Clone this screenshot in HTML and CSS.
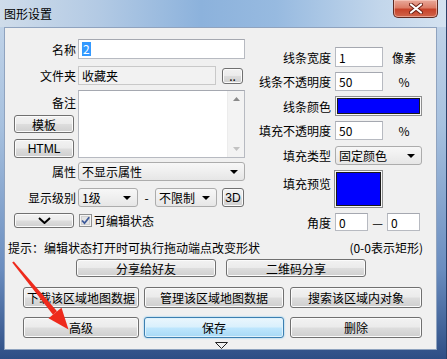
FILE: index.html
```html
<!DOCTYPE html>
<html lang="zh-CN">
<head>
  <meta charset="UTF-8">
  <title>图形设置</title>
  <link rel="stylesheet" href="styles.css">
</head>
<body>
  <div class="window">
    <div class="titlebar">
      <span class="title">图形设置</span>
      <div class="close">
        <svg width="14" height="11" viewBox="0 0 14 11">
          <path d="M2 1.5 L12 9.5 M12 1.5 L2 9.5" stroke="#6a1f14" stroke-width="4" stroke-linecap="round"/>
          <path d="M2 1.5 L12 9.5 M12 1.5 L2 9.5" stroke="#ffffff" stroke-width="2.2" stroke-linecap="round"/>
        </svg>
      </div>
    </div>

    <div class="client">
      <div class="top">
        <!-- columna izquierda -->
        <div class="left">
          <div class="row r-name">
            <span class="lbl">名称</span>
            <div class="field w-full"><span class="selected">2</span></div>
          </div>
          <div class="row r-folder">
            <span class="lbl">文件夹</span>
            <div class="field readonly">收藏夹</div>
            <button class="btn dots">..</button>
          </div>
          <div class="row r-memo">
            <div class="memo-side">
              <span class="lbl">备注</span>
              <button class="btn side b-tpl">模板</button>
              <button class="btn side b-html">HTML</button>
            </div>
            <div class="field textarea">
              <div class="vscroll">
                <svg width="7" height="4" viewBox="0 0 7 4"><polygon points="0,4 7,4 3.5,0" fill="#8a8a8a"/></svg>
                <svg width="7" height="4" viewBox="0 0 7 4"><polygon points="0,0 7,0 3.5,4" fill="#c2c2c2"/></svg>
              </div>
            </div>
          </div>
          <div class="row r-attr">
            <span class="lbl">属性</span>
            <div class="combo w-full"><span>不显示属性</span><i class="caret"></i></div>
          </div>
          <div class="row r-level">
            <span class="lbl">显示级别</span>
            <div class="combo w-lvl"><span>1级</span><i class="caret"></i></div>
            <span class="dash">-</span>
            <div class="combo w-lim"><span>不限制</span><i class="caret"></i></div>
            <button class="btn b3d">3D</button>
          </div>
          <div class="row r-check">
            <button class="btn chevron">
              <svg width="13" height="7" viewBox="0 0 13 7"><polyline points="1,1 6.5,6 12,1" fill="none" stroke="#000" stroke-width="2"/></svg>
            </button>
            <svg class="checkbox" width="13" height="13" viewBox="0 0 13 13">
              <rect x="0.5" y="0.5" width="12" height="12" fill="#f4f4f4" stroke="#8e8f8f"/>
              <rect x="2.5" y="2.5" width="8" height="8" fill="#e4e4e4" stroke="#d0d0d0"/>
              <path d="M3 6.5 L5.5 9.2 L10.2 3.2" fill="none" stroke="#3d5a9a" stroke-width="1.8"/>
            </svg>
            <span class="check-text">可编辑状态</span>
          </div>
        </div>

        <!-- columna derecha -->
        <div class="right">
          <div class="row r1">
            <span class="lbl">线条宽度</span>
            <div class="field num">1</div>
            <span class="unit">像素</span>
          </div>
          <div class="row r2">
            <span class="lbl">线条不透明度</span>
            <div class="field num">50</div>
            <span class="unit">%</span>
          </div>
          <div class="row r3">
            <span class="lbl">线条颜色</span>
            <div class="swatch line-color"><i></i></div>
          </div>
          <div class="row r4">
            <span class="lbl">填充不透明度</span>
            <div class="field num">50</div>
            <span class="unit">%</span>
          </div>
          <div class="row r5">
            <span class="lbl">填充类型</span>
            <div class="combo w-fill"><span>固定颜色</span><i class="caret"></i></div>
          </div>
          <div class="row r6">
            <span class="lbl">填充预览</span>
            <div class="swatch preview"><i></i></div>
          </div>
          <div class="row r7">
            <span class="lbl">角度</span>
            <div class="field angle">0</div>
            <span class="em">—</span>
            <div class="field angle">0</div>
          </div>
        </div>
      </div>

      <div class="hint">
        <span>提示：编辑状态打开时可执行拖动端点改变形状</span>
        <span>(0-0表示矩形)</span>
      </div>

      <div class="share">
        <button class="btn">分享给好友</button>
        <button class="btn">二维码分享</button>
      </div>

      <div class="actions">
        <button class="btn">下载该区域地图数据</button>
        <button class="btn">管理该区域地图数据</button>
        <button class="btn">搜索该区域内对象</button>
        <button class="btn">高级</button>
        <button class="btn primary">保存</button>
        <button class="btn">删除</button>
      </div>

      <div class="more">
        <svg width="13" height="7" viewBox="0 0 13 7"><polygon points="0.5,0.5 12.5,0.5 6.5,6.5" fill="none" stroke="#222"/></svg>
      </div>
    </div>

    <!-- flecha roja de anotación -->
    <svg class="arrow" width="447" height="359" viewBox="0 0 447 359">
      <polygon points="12.2,262.6 13.8,261.4 57,311.2 53,314.8" fill="#ee2a1c"/>
      <polygon points="68.5,329.5 48.5,318.3 61.5,307.7" fill="#ee2a1c"/>
    </svg>
  </div>
</body>
</html>
```

FILE: styles.css
```css
* {
  box-sizing: border-box;
}

html, body {
  margin: 0;
  padding: 0;
  width: 447px;
  height: 359px;
  overflow: hidden;
  font-family: "Noto Sans CJK SC", "Noto Sans", sans-serif;
  font-size: 12px;
  color: #000;
}

button {
  font: inherit;
  color: #000;
  padding: 0;
}

.window {
  position: relative;
  width: 447px;
  height: 359px;
  display: flex;
  flex-direction: column;
  background: linear-gradient(to bottom, #c6d7ea 0%, #a7c1df 35%, #6a8dbf 75%, #2e4e85 100%);
  border-right: 1px solid #2b4068;
}

.titlebar {
  height: 29px;
  display: flex;
  align-items: flex-start;
  background: linear-gradient(to right, #cfdcea 0%, #b3cae4 22%, #8cb2dc 45%, #97bae0 62%, #c2d6eb 85%, #d4e2f0 100%);
}

.title {
  padding: 6px 0 0 4px;
  line-height: 16px;
  font-size: 12px;
  color: #000;
}

.close {
  margin-left: auto;
  margin-right: 8px;
  width: 45px;
  height: 18px;
  border: 1px solid #5e2a22;
  border-top: none;
  border-radius: 0 0 5px 5px;
  background: linear-gradient(to bottom, #e9a99a 0%, #dc7d67 45%, #c7432a 55%, #d0644a 100%);
  box-shadow: inset 0 0 0 1px rgba(255, 220, 210, 0.5);
  display: flex;
  justify-content: center;
  align-items: center;
}

.client {
  flex: 1;
  margin: 0 9px 9px 4px;
  border: 1px solid #8fa3bf;
  background: #f0f0f0;
  display: flex;
  flex-direction: column;
}

.top {
  height: 211px;
  display: flex;
}

.row {
  display: flex;
  align-items: center;
}

.lbl {
  flex: none;
  text-align: right;
  white-space: nowrap;
}

/* izquierda */
.left {
  width: 240px;
  padding: 11px 0 0 9px;
}

.left .lbl {
  width: 62px;
  margin-right: 2px;
}

.field {
  height: 19px;
  background: #fff;
  border: 1px solid #b7bac1;
  border-top-color: #a5a8b0;
  display: flex;
  align-items: center;
  padding-left: 3px;
  white-space: nowrap;
}

.w-full {
  width: 167px;
}

.r-name .field {
  height: 20px;
}

.selected {
  background: #3399ff;
  color: #fff;
  padding: 0 1px;
  line-height: 14px;
}

.r-folder {
  margin-top: 7px;
}

.readonly {
  width: 138px;
  background: #f2f2f2;
  border-color: #c9c9c9;
}

.dots {
  width: 21px;
  height: 16px;
  margin-left: 6px;
  font-size: 10px;
  line-height: 8px;
}

.r-memo {
  margin-top: 5px;
  align-items: flex-start;
}

.memo-side {
  width: 64px;
  display: flex;
  flex-direction: column;
}

.memo-side .lbl {
  height: 25px;
  line-height: 25px;
}

.btn.side {
  width: 60px;
  height: 18px;
}

.b-html {
  margin-top: 6px;
  height: 19px !important;
  font-family: "Liberation Sans", sans-serif;
  font-size: 11px;
}

.textarea {
  width: 167px;
  height: 68px;
  padding: 0;
  justify-content: flex-end;
  align-items: stretch;
}

.vscroll {
  width: 17px;
  background: #f3f3f3;
  border-left: 1px solid #ececec;
  display: flex;
  flex-direction: column;
  justify-content: space-between;
  align-items: center;
  padding: 6px 0 6px;
}

.r-attr {
  margin-top: 4px;
}

.combo {
  height: 19px;
  border: 1px solid #acacac;
  border-radius: 3px;
  background: linear-gradient(to bottom, #f7f7f7 0%, #efefef 50%, #e6e6e6 100%);
  display: flex;
  align-items: center;
  padding: 0 6px 0 3px;
  white-space: nowrap;
}

.combo span {
  flex: 1;
}

.caret {
  width: 0;
  height: 0;
  border-left: 4px solid transparent;
  border-right: 4px solid transparent;
  border-top: 4px solid #000;
}

.r-level {
  margin-top: 7px;
}

.w-lvl {
  width: 60px;
}

.dash {
  width: 17px;
  text-align: center;
}

.w-lim {
  width: 62px;
}

.b3d {
  width: 22px;
  height: 19px;
  margin-left: 5px;
  font-family: "Liberation Sans", sans-serif;
  font-size: 10px;
}

.r-check {
  margin-top: 5px;
}

.chevron {
  width: 60px;
  height: 15px;
  display: flex;
  justify-content: center;
  align-items: center;
}

.checkbox {
  margin-left: 5px;
}

.check-text {
  margin-left: 2px;
}

/* derecha */
.right {
  flex: 1;
  padding-top: 19px;
}

.right .lbl {
  width: 86px;
  margin-right: 4px;
}

.right .row {
  margin-top: 5px;
}

.right .r1 {
  margin-top: 0;
}

.num {
  width: 48px;
}

.r1 .num {
  height: 20px;
}

.unit {
  width: 42px;
  text-align: center;
}

.swatch {
  border: 1px solid #8e8f8f;
  padding: 1px;
  background: #f7f7f7;
}

.swatch i {
  display: block;
  width: 100%;
  height: 100%;
  background: #0000ff;
  border: 1px solid #1a1a1a;
}

.line-color {
  width: 87px;
  height: 20px;
}

.right .r5 {
  margin-top: 6px;
}

.w-fill {
  width: 87px;
}

.r6 {
  align-items: flex-start;
}

.r6 .lbl {
  padding-top: 5px;
}

.preview {
  width: 49px;
  height: 38px;
  margin-left: -1px;
}

.angle {
  width: 33px;
  height: 18px;
}

.em {
  width: 19px;
  text-align: center;
}

/* parte de abajo */
.hint {
  height: 17px;
  line-height: 17px;
  display: flex;
  justify-content: space-between;
  padding: 0 13px 0 3px;
}

.share {
  margin-top: 3px;
  display: flex;
  justify-content: center;
  gap: 10px;
  padding-left: 1px;
}

.share .btn {
  width: 140px;
  height: 18px;
}

.actions {
  margin-top: 10px;
  padding-left: 18px;
  display: grid;
  grid-template-columns: 116px 140px 133px;
  grid-auto-rows: 21px;
  column-gap: 5px;
  row-gap: 9px;
}

.actions .btn:nth-child(3n) {
  margin-left: 1px;
}

.btn {
  border: 1px solid #707070;
  border-radius: 3px;
  background: linear-gradient(to bottom, #f2f2f2 0%, #ebebeb 48%, #dddddd 52%, #cfcfcf 100%);
  box-shadow: inset 0 0 0 1px #fbfbfb;
  display: flex;
  justify-content: center;
  align-items: center;
  white-space: nowrap;
  font-size: 12px;
}

.btn.primary {
  border-color: #3c7fb1;
  background: linear-gradient(to bottom, #eaf6fd 0%, #d9f0fc 48%, #bee6fd 52%, #a7d9f5 100%);
  box-shadow: inset 0 0 0 1px #dff2fc, 0 0 2px #6fc3f0;
}

.more {
  margin-top: 4px;
  display: flex;
  justify-content: center;
  padding-left: 1px;
}

.arrow {
  position: absolute;
  left: 0;
  top: 0;
  pointer-events: none;
}
```
